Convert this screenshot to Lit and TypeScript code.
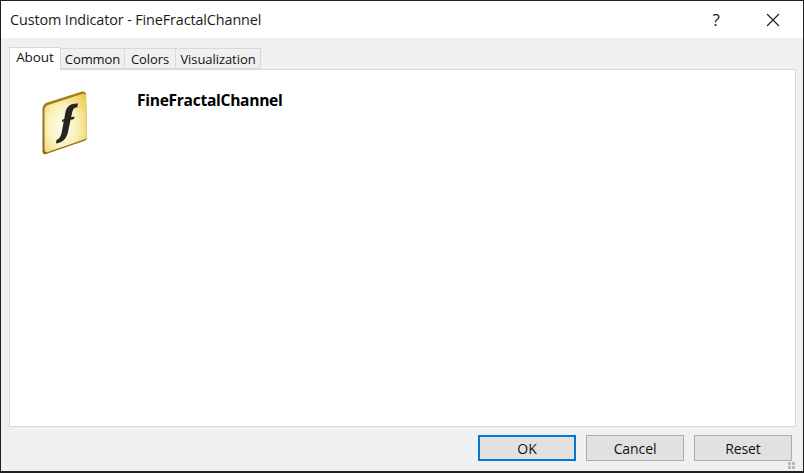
import { LitElement, html, css, svg } from "lit";
import { customElement } from "lit/decorators.js";

const icon = svg`<svg class="icon" width="50" height="70" viewBox="0 0 50 70">
  <defs>
    <radialGradient id="face" cx="0.42" cy="0.55" r="0.72">
      <stop offset="0" stop-color="#fffdf0"/>
      <stop offset="0.5" stop-color="#fbf0b8"/>
      <stop offset="1" stop-color="#ecc94f"/>
    </radialGradient>
    <linearGradient id="edge" x1="0" y1="0" x2="0" y2="1">
      <stop offset="0" stop-color="#a97f1c"/>
      <stop offset="1" stop-color="#8b6a16"/>
    </linearGradient>
  </defs>
  <path d="M1.500 19 Q1.500 15 5 13 L41 1.500 Q45 1 45 5 L46 47 Q46 50 43 51 L5 64 Q1.500 65 1.500 61 Z" fill="url(#edge)"/>
  <path d="M3.500 20 Q3.500 16.500 7 15 L41 4 Q45 3 45 7 L46 46 Q46 48.500 43 49.500 L7 62 Q3.500 63 3.500 59.500 Z" fill="url(#face)"/>
  <path d="M37 13.500 L36.300 17.500 C33.500 17 32 18.500 31 23 L27 42 C25.500 49 21.500 52.500 15 53.500 L15.500 50 C18.500 49 20 46 20.800 42 L24.500 22 C25.800 16 30 13 37 13.500 Z" fill="#262420"/>
  <path d="M21.500 29.500 L33.500 26.500 L33 29 L21 32 Z" fill="#262420"/>
</svg>`;

@customElement("app-root")
export class AppRoot extends LitElement {
  static styles = css`
    :host { display: block; width: 804px; height: 473px; }
    * { box-sizing: border-box; }
    .window {
      width: 804px; height: 473px; display: flex; flex-direction: column; position: relative;
      border: 1px solid #1f1f1f; border-bottom-width: 2px; background: #f0f0f0;
      font-family: "Open Sans", "Noto Sans", sans-serif; color: #111; overflow: hidden;
    }
    .speck { position: absolute; left: -1px; top: 185px; width: 1px; height: 4px; background: #2fae4a; }
    .titlebar {
      height: 37px; flex: none; background: #fff; display: flex; align-items: center;
      padding: 0 0 0 9px; font-size: 14.4px; letter-spacing: -0.12px; color: #1b1b1b;
    }
    .title { flex: 1; }
    .help { width: 18px; text-align: center; font-size: 17px; margin-right: 41px; }
    .close { width: 14px; height: 14px; margin-right: 23px; display: block; }
    .body { flex: 1; display: flex; flex-direction: column; padding: 9px 7px 0 8px; min-height: 0; }
    .tabs { display: flex; align-items: flex-end; height: 22px; flex: none; position: relative; z-index: 1; }
    .tab {
      height: 21px; border: 1px solid #d9d9d9; border-left-width: 0; background: #f0f0f0;
      font-size: 13px; display: flex; align-items: center; justify-content: center;
      letter-spacing: -0.07px; padding-top: 1px;
    }
    .tab.active {
      height: 23px; background: #fff; border-left-width: 1px; border-bottom: 0; margin-bottom: -1px;
      font-size: 13.5px; padding-bottom: 5px; padding-top: 0;
    }
    .panel {
      flex: 1; background: #fff; border: 1px solid #d9d9d9; min-height: 0;
      display: flex; align-items: flex-start; padding: 20px 0 0 31px;
    }
    .icon { display: block; flex: none; }
    .name { font-weight: 700; font-size: 15.6px; margin: -1px 0 0 46px; letter-spacing: -0.3px; color: #000; }
    .footer { height: 44px; flex: none; display: flex; justify-content: flex-end; align-items: flex-start; gap: 10px; padding: 8px 4px 0 0; position: relative; }
    button {
      width: 98px; height: 26px; background: #e1e1e1; border: 1px solid #adadad; padding: 0;
      font: 14px "Open Sans", sans-serif; color: #111; letter-spacing: -0.1px;
    }
    button.primary { border: 2px solid #0078d7; }
    .grip { position: absolute; right: 0; bottom: 1px; width: 8px; height: 8px; color: #b8b8b8; display: block; }
  `;

  render() {
    return html`<div class="window">
      <div class="speck"></div>
      <div class="titlebar">
        <span class="title">Custom Indicator - FineFractalChannel</span>
        <span class="help">?</span>
        <svg class="close" viewBox="0 0 14 14"><path d="M1 1 L13 13 M13 1 L1 13" stroke="#1a1a1a" stroke-width="1.100" fill="none"/></svg>
      </div>
      <div class="body">
        <div class="tabs">
          <div class="tab active" style="width:52px">About</div>
          <div class="tab" style="width:64px">Common</div>
          <div class="tab" style="width:51px">Colors</div>
          <div class="tab" style="width:85px">Visualization</div>
        </div>
        <div class="panel">
          ${icon}
          <div class="name">FineFractalChannel</div>
        </div>
        <div class="footer">
          <button class="primary">OK</button>
          <button>Cancel</button>
          <button>Reset</button>
          <svg class="grip" viewBox="0 0 8 8"><path d="M0 0h3v3H0zM4 0h3v3H4zM0 4h3v3H0zM4 4h3v3H4z" fill="currentColor"/></svg>
        </div>
      </div>
    </div>`;
  }
}
